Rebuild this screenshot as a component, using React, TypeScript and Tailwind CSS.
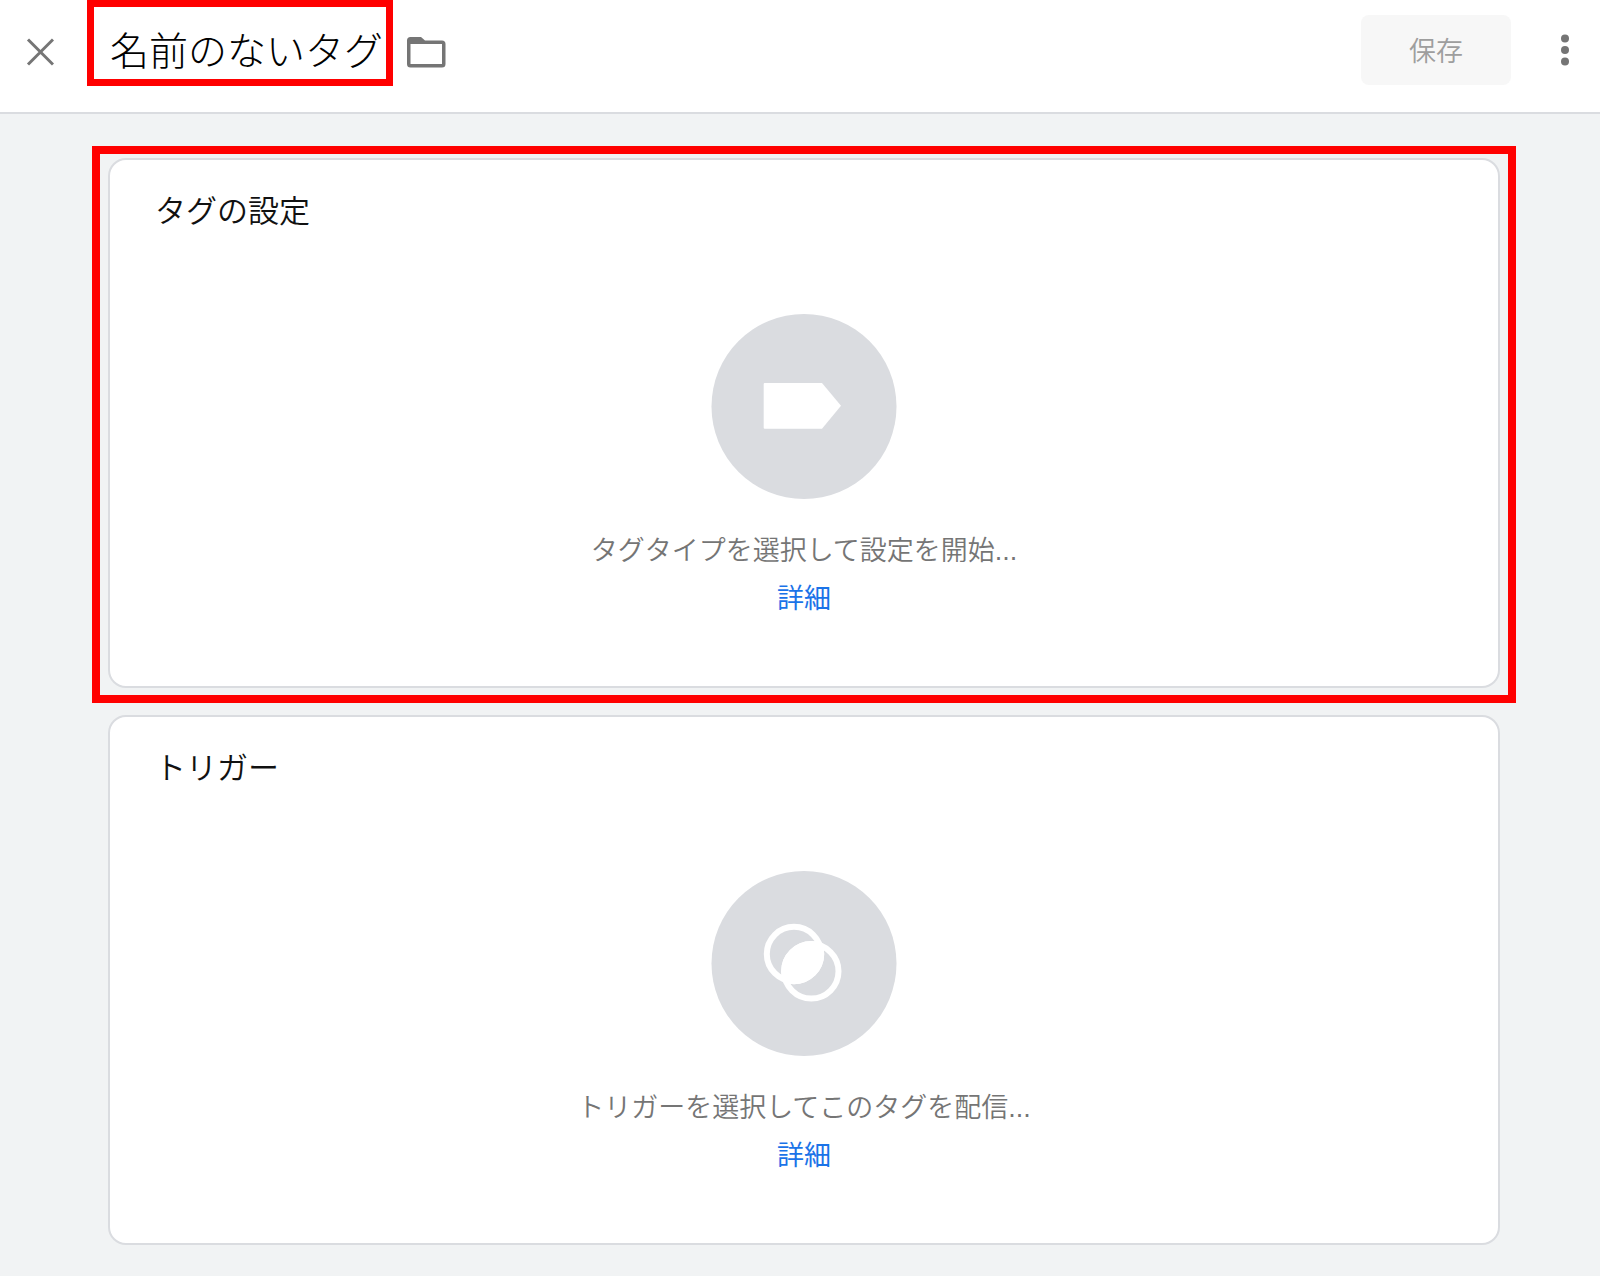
import { useState, type ReactNode } from "react";

function CloseIcon() {
    return (
        <svg viewBox="0 0 28 28" className="w-7 h-7" fill="none" stroke="#757575" strokeWidth="3">
            <path d="M2 1.5 27 26.5M27 1.5 2 26.5" />
        </svg>
    );
}

function FolderIcon() {
    return (
        <svg viewBox="0 0 40 32" className="w-10 h-8">
            <path
                fill="#757575"
                fillRule="evenodd"
                d="M4.500 1H15L19 4.500H36Q39.500 4.500 39.500 8V28Q39.500 31.500 36 31.500H4.500Q1 31.500 1 28V4.500Q1 1 4.500 1ZM4.500 8V28H36V8Z"
            />
        </svg>
    );
}

function MoreIcon() {
    return (
        <svg viewBox="0 0 10 32" className="w-[10px] h-8" fill="#757575">
            <circle cx="5" cy="4.5" r="4" />
            <circle cx="5" cy="16" r="4" />
            <circle cx="5" cy="27.5" r="4" />
        </svg>
    );
}

function TagIcon() {
    return (
        <svg viewBox="0 0 186 186" className="w-[186px] h-[186px]">
            <circle cx="93" cy="92.5" r="92.5" fill="#dadce0" />
            <path d="M53.7 69H111L130 91.8 111 114.7H53.7Q52.7 114.7 52.7 113.7V70Q52.7 69 53.7 69Z" fill="#fff" />
        </svg>
    );
}

function TriggerIcon() {
    return (
        <svg viewBox="0 0 186 186" className="w-[186px] h-[186px]">
            <defs>
                <clipPath id="overlap">
                    <circle cx="83" cy="83" r="30.2" />
                </clipPath>
            </defs>
            <circle cx="93" cy="92.5" r="92.5" fill="#dadce0" />
            <g fill="none" stroke="#fff" strokeWidth="6">
                <circle cx="83" cy="83" r="27.2" />
                <circle cx="100.3" cy="100.3" r="27.2" />
            </g>
            <circle cx="100.3" cy="100.3" r="30.2" fill="#fff" clipPath="url(#overlap)" />
        </svg>
    );
}

type CardProps = {
    title: string;
    message: string;
    icon: ReactNode;
    highlighted?: boolean;
};

function SettingCard({ title, message, icon, highlighted }: CardProps) {
    return (
        <section className="relative bg-white border-2 border-[#dadce0] rounded-[18px] pt-7 pb-[63px]">
            <h2 className="pl-[45px] text-[31px] leading-[48px] text-[#111111]">{title}</h2>
            <div className="mt-[78px] flex flex-col items-center text-[27px] leading-[48px]">
                {icon}
                <p className="mt-[27px] text-[#757575]">{message}</p>
                <a href="#" className="font-normal text-[#1a73e8]">詳細</a>
            </div>
            {highlighted && (
                <div className="absolute -inset-x-[18px] -top-[14px] -bottom-[17px] border-8 border-[#ff0000] pointer-events-none" />
            )}
        </section>
    );
}

export default function App() {
    const [name, setName] = useState("名前のないタグ");

    return (
        <div className="min-h-screen bg-[#f1f3f4] font-['Liberation_Sans','Noto_Sans_CJK_JP',sans-serif] font-[350]">
            <header className="bg-white border-b-2 border-[#dadce0] pb-3">
                <div className="h-[100px] flex items-center pl-[26px] pr-[30px]">
                    <button type="button" aria-label="閉じる" className="pt-1">
                        <CloseIcon />
                    </button>
                    <div className="relative ml-[33px] w-[306px] h-[100px] flex items-center pl-[23px] pr-2">
                        <input
                            type="text"
                            aria-label="タグの名前"
                            value={name}
                            onChange={(e) => setName(e.target.value)}
                            className="w-full h-14 pb-1 text-[39px] leading-[52px] font-light text-black outline-none"
                        />
                        <div className="absolute inset-x-0 top-0 h-[86px] border-[7px] border-[#ff0000] pointer-events-none" />
                    </div>
                    <button type="button" aria-label="フォルダ" className="ml-[13px] pt-1">
                        <FolderIcon />
                    </button>
                    <button type="button" disabled className="ml-auto w-[150px] h-[70px] pt-1 rounded-lg bg-[#f7f7f7] text-[27px] text-[#9e9e9e]">
                        保存
                    </button>
                    <button type="button" aria-label="その他" className="ml-[49px]">
                        <MoreIcon />
                    </button>
                </div>
            </header>

            <main className="pt-11 pb-[31px] pl-[108px] pr-[100px] flex flex-col gap-[27px]">
                <SettingCard title="タグの設定" message="タグタイプを選択して設定を開始..." icon={<TagIcon />} highlighted />
                <SettingCard title="トリガー" message="トリガーを選択してこのタグを配信..." icon={<TriggerIcon />} />
            </main>
        </div>
    );
}
